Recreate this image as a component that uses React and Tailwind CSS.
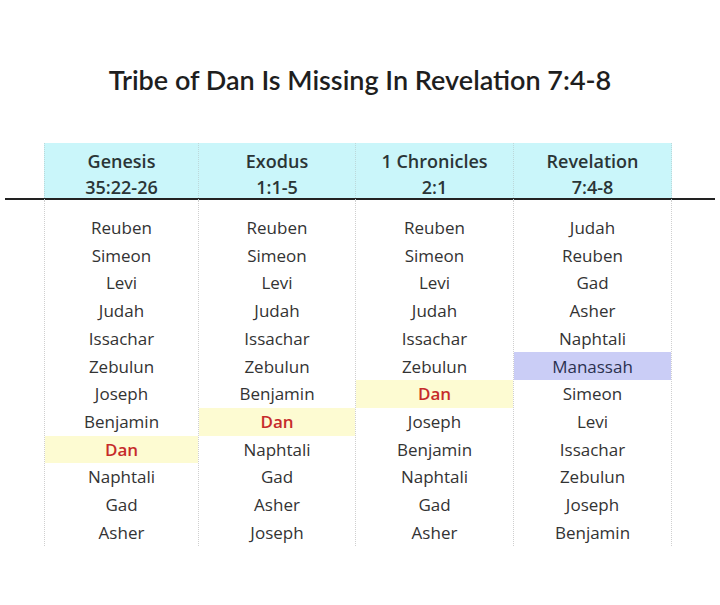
import React from "react";

const columns = [
  {
    title: "Genesis",
    ref: "35:22-26",
    tribes: ["Reuben", "Simeon", "Levi", "Judah", "Issachar", "Zebulun", "Joseph", "Benjamin", "Dan", "Naphtali", "Gad", "Asher"],
  },
  {
    title: "Exodus",
    ref: "1:1-5",
    tribes: ["Reuben", "Simeon", "Levi", "Judah", "Issachar", "Zebulun", "Benjamin", "Dan", "Naphtali", "Gad", "Asher", "Joseph"],
  },
  {
    title: "1 Chronicles",
    ref: "2:1",
    tribes: ["Reuben", "Simeon", "Levi", "Judah", "Issachar", "Zebulun", "Dan", "Joseph", "Benjamin", "Naphtali", "Gad", "Asher"],
  },
  {
    title: "Revelation",
    ref: "7:4-8",
    tribes: ["Judah", "Reuben", "Gad", "Asher", "Naphtali", "Manassah", "Simeon", "Levi", "Issachar", "Zebulun", "Joseph", "Benjamin"],
  },
];

const TribeCell = ({ name }) => {
  if (name === "Dan") {
    return (
      <div className="h-[27.7px] flex items-center justify-center bg-[#fdfbd2] text-[#c62b2b] font-semibold">
        {name}
      </div>
    );
  }
  if (name === "Manassah") {
    return (
      <div className="h-[27.7px] flex items-center justify-center bg-[#cacdf6] text-[#2b3150]">
        {name}
      </div>
    );
  }
  return <div className="h-[27.7px] flex items-center justify-center">{name}</div>;
};

export default function App() {
  return (
    <div className="w-[720px] h-[605px] bg-white text-[#333] font-['Open_Sans',sans-serif]">
      {/* title */}
      <div className="pt-[62px] h-[143px] text-center">
        <h1 className="text-[27px] leading-[36px] font-semibold text-[#1e1e1e] font-['Lato',sans-serif]">
          Tribe of Dan Is Missing In Revelation 7:4-8
        </h1>
      </div>

      {/* header */}
      <div className="ml-[44px] w-[628px] grid grid-cols-[154px_157px_158px_159px] bg-[#caf6fa] h-[55px]">
        {columns.map((col, i) => (
          <div
            key={col.title}
            className={[
              "pt-[5px] text-center text-[18px] leading-[26px] font-semibold text-[#2a3536] border-l border-dotted border-[#bcd8da]",
              i === columns.length - 1 ? "border-r" : "",
            ].join(" ")}
          >
            <div>{col.title}</div>
            <div>{col.ref}</div>
          </div>
        ))}
      </div>

      <div className="mx-[5px] h-[2px] bg-[#222]" />

      {/* tribe lists */}
      <div className="ml-[44px] w-[628px] grid grid-cols-[154px_157px_158px_159px] text-[17px]">
        {columns.map((col, i) => (
          <div
            key={col.title}
            className={[
              "pt-[14px] border-l border-dotted border-[#cfcfcf]",
              i === columns.length - 1 ? "border-r" : "",
            ].join(" ")}
          >
            {col.tribes.map((t, j) => (
              <TribeCell key={j} name={t} />
            ))}
          </div>
        ))}
      </div>
    </div>
  );
}
